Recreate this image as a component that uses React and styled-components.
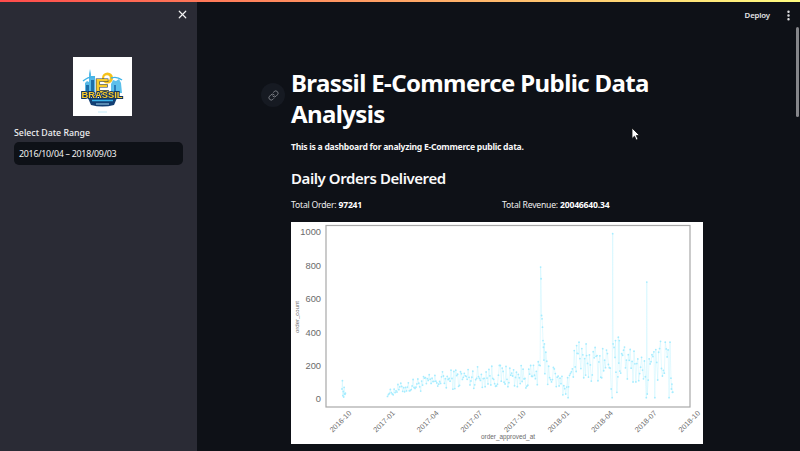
import React from "react";
import styled, { createGlobalStyle } from "styled-components";
import { X, Link, EllipsisVertical } from "lucide-react";

const GlobalStyle = createGlobalStyle`
  html, body {
    margin: 0;
    height: 100%;
    overflow: hidden;
    background: #0e1117;
  }
  #root {
    height: 100%;
  }
`;

const FONT = `"Noto Sans", "Open Sans", sans-serif`;

// chart scale: pixels inside the 412x222 picture
const PLOT = { left: 35, right: 399, top: 3.5, bottom: 185 };
const yOf = (v) => 177 - v * 0.167;
const xOfDay = (d) => 51 + d * 0.474;

const anchors = [
  [96, 30], [120, 60], [160, 85], [205, 105], [260, 125], [320, 135], [400, 130],
  [419, 150], [434, 170], [456, 100], [474, 95], [494, 190], [540, 215], [585, 210],
  [620, 195], [640, 165], [655, 190], [675, 235], [690, 250], [698, 60],
];

const spikes = {
  418: 200, 419: 790, 420: 720, 421: 500, 422: 480, 423: 430, 424: 350, 425: 310, 427: 330, 430: 280,
  477: 8, 466: 25, 472: 30, 490: 290, 495: 320, 500: 340, 515: 330, 516: 260,
  571: 990, 570: 8, 568: 60, 572: 330, 577: 350, 580: 40, 583: 370, 585: 350,
  643: 700, 642: 8, 644: 30, 660: 8, 668: 280, 682: 340, 684: 300, 690: 8, 692: 340, 695: 60, 697: 40,
};

const makeData = () => {
  let seed = 1234;
  const rnd = () => {
    seed = (seed * 16807) % 2147483647;
    return seed / 2147483647;
  };
  const early = [60, 110, 20, 45, 12, 70, 30, 28, 35];
  const points = early.map((v, i) => [xOfDay(i * 0.9), yOf(v)]);
  let a = 0;
  for (let d = 96; d <= 698; d++) {
    if (d % 2 && !spikes[d]) continue;
    while (a < anchors.length - 2 && anchors[a + 1][0] < d) a++;
    const [d0, v0] = anchors[a];
    const [d1, v1] = anchors[a + 1];
    const base = v0 + ((v1 - v0) * (d - d0)) / (d1 - d0);
    const v = spikes[d] ?? Math.max(8, base * (0.5 + rnd() * 1.05));
    points.push([xOfDay(d), yOf(v)]);
  }
  return points;
};

const points = makeData();
const EARLY_COUNT = 9;
const toPath = (list) =>
  list.map(([x, y], i) => `${i ? "L" : "M"}${x.toFixed(1)} ${y.toFixed(1)}`).join("");

const yTicks = [0, 200, 400, 600, 800, 1000];
const xTicks = ["2016-10", "2017-01", "2017-04", "2017-07", "2017-10", "2018-01", "2018-04", "2018-07", "2018-10"];

const Page = styled.div`
  display: flex;
  height: 100vh;
  position: relative;
  overflow: hidden;
  font-family: ${FONT};
  color: #fafafa;
  background: #0e1117;
`;

const Decoration = styled.div`
  position: absolute;
  top: 0;
  left: 0;
  right: 0;
  height: 2px;
  background: linear-gradient(90deg, #ff4b4b, #fffd80);
  z-index: 3;
`;

const Sidebar = styled.aside`
  width: 197px;
  flex-shrink: 0;
  background: #2a2b35;
  display: flex;
  flex-direction: column;
  padding: 8px 14px 0;
  box-sizing: border-box;
`;

const CloseRow = styled.div`
  display: flex;
  justify-content: flex-end;
  height: 49px;
  margin-right: -6px;
  color: #f4f4f4;
`;

const LogoBox = styled.div`
  width: 59px;
  height: 59px;
  background: #fff;
  margin: 0 0 11px 59px;
  filter: blur(0.35px);
`;

const FieldLabel = styled.label`
  font-size: 8.8px;
  line-height: 12px;
  font-weight: 500;
  margin-bottom: 3px;
  color: #f0f0f2;
`;

const DateInput = styled.div`
  height: 23px;
  background: #0e1117;
  border-radius: 5px;
  padding: 0 5px;
  display: flex;
  align-items: center;
  font-size: 8.9px;
  color: #f2f2f2;
  letter-spacing: -0.27px;
`;

const Main = styled.main`
  flex: 1;
  min-width: 0;
  display: flex;
  flex-direction: column;
  position: relative;
`;

const Toolbar = styled.header`
  height: 30px;
  flex-shrink: 0;
  display: flex;
  align-items: center;
  justify-content: flex-end;
  gap: 12px;
  padding: 0 5px 0 0;
  font-size: 7.8px;
  font-weight: 600;
  letter-spacing: -0.15px;
  color: #e4e4e6;
`;

const Content = styled.section`
  width: 412px;
  margin-left: 94px;
  padding-top: 37px;
`;

const Title = styled.h1`
  position: relative;
  margin: 0 0 12px;
  font-size: 24px;
  line-height: 31px;
  font-weight: 700;
  letter-spacing: -0.62px;
  color: #fff;
`;

const AnchorButton = styled.span`
  position: absolute;
  left: -30px;
  top: 16px;
  width: 24px;
  height: 24px;
  border-radius: 50%;
  background: #161a22;
  display: flex;
  align-items: center;
  justify-content: center;
  color: #9a9ca3;
`;

const Lead = styled.p`
  margin: 0 0 13px;
  font-size: 8.6px;
  line-height: 13px;
  font-weight: 700;
  letter-spacing: -0.27px;
  color: #f6f6f6;
`;

const Subtitle = styled.h2`
  margin: 0 0 10px;
  font-size: 15px;
  line-height: 22px;
  font-weight: 600;
  letter-spacing: -0.42px;
  color: #fafafa;
`;

const Stats = styled.div`
  display: grid;
  grid-template-columns: 211px 1fr;
  margin-bottom: 10px;
`;

const Stat = styled.div`
  font-size: 8.6px;
  line-height: 13px;
  letter-spacing: -0.2px;
  color: #f0f0f0;

  b {
    font-weight: 700;
    color: #fff;
  }
`;

const ChartImage = styled.svg`
  display: block;
  width: 412px;
  height: 222px;
  background: #fff;
`;

const Scrollbar = styled.div`
  position: absolute;
  right: 1px;
  top: 27px;
  width: 3px;
  height: 90px;
  border-radius: 2px;
  background: #85868a;
`;

const Cursor = styled.svg`
  position: absolute;
  left: 434px;
  top: 127px;
`;

const LogoE = styled.text`
  font-family: "Liberation Sans", sans-serif;
  font-weight: 700;
  font-size: 21px;
  fill: #f9cc2a;
  stroke: #14305a;
  stroke-width: 1.2px;
  paint-order: stroke;
`;

const LogoBrand = styled.text`
  font-family: "Liberation Sans", sans-serif;
  font-weight: 700;
  font-size: 8.5px;
  fill: #f7c92c;
  stroke: #12335f;
  stroke-width: 1.8px;
  paint-order: stroke;
  text-anchor: middle;
`;

const Logo = () => (
  <svg width="59" height="59" viewBox="0 0 59 59">
    <circle cx="34.500" cy="21" r="5.500" fill="#f5c21b" />
    <circle cx="34" cy="21" r="2.800" fill="#fff" />
    <path d="M12 36V26l2-2 2 1V17l1-5 1 5v2h4v17z" fill="#55b8e6" />
    <path d="M13 36v-8h3v8zM18 36V23h3v13z" fill="#1d6ea8" />
    <path d="M38 36V27l2-4 3 1 3-2 2 4 1 10z" fill="#5cc0ea" />
    <path d="M41 36v-8h2v8z" fill="#2a7cb8" />
    <path d="M10 24q6-5 12-4M38 21q6-2 11 2" stroke="#3fb4e8" strokeWidth="1.400" fill="none" />
    <LogoE x="22" y="36">E</LogoE>
    <path d="M15 41h29l-3 7q-11.500 3-23 0z" fill="#123f74" />
    <path d="M19 43.500h21" stroke="#3bb4ea" strokeWidth="1.500" />
    <path d="M23 47h13" stroke="#9fd6ee" strokeWidth="1" />
    <LogoBrand x="29" y="41" textLength="41" lengthAdjust="spacingAndGlyphs">BRASSIL</LogoBrand>
    <path d="M25 55h9" stroke="#cdeefa" strokeWidth="1.200" />
  </svg>
);

const AxisText = styled.text`
  font-family: "Liberation Sans", Arial, sans-serif;
  fill: #6a6a6a;
  font-size: ${(p) => p.$size || 9.3}px;
`;

const Chart = () => (
  <ChartImage viewBox="0 0 412 222">
    <rect x={PLOT.left} y={PLOT.top} width={PLOT.right - PLOT.left} height={PLOT.bottom - PLOT.top} fill="none" stroke="#a8a8a8" strokeWidth="1.200" />
    {yTicks.map((t) => (
      <AxisText key={t} x="30" y={yOf(t) + 3.400} textAnchor="end">{t}</AxisText>
    ))}
    {xTicks.map((t, i) => {
      const x = 49.500 + i * 43.600;
      return (
        <AxisText key={t} $size={7.400} x={x} y={202} textAnchor="middle" transform={`rotate(-45 ${x} 199.500)`}>
          {t}
        </AxisText>
      );
    })}
    <AxisText $size={6.400} x="217" y="217.300" textAnchor="middle">order_approved_at</AxisText>
    <AxisText $size={6} x="8" y="95" textAnchor="middle" transform="rotate(-90 8 95)">order_count</AxisText>
    <path d={toPath(points.slice(0, EARLY_COUNT))} fill="none" stroke="#c9f4ff" strokeWidth="0.500" />
    <path d={toPath(points.slice(EARLY_COUNT))} fill="none" stroke="#c9f4ff" strokeWidth="0.500" />
    {points.map(([x, y], i) => (
      <circle key={i} cx={x} cy={y} r="0.900" fill="#a6ecff" />
    ))}
  </ChartImage>
);

export default function App() {
  return (
    <Page>
      <GlobalStyle />
      <Decoration />
      <Sidebar>
        <CloseRow>
          <X size={13} strokeWidth={2.200} />
        </CloseRow>
        <LogoBox>
          <Logo />
        </LogoBox>
        <FieldLabel>Select Date Range</FieldLabel>
        <DateInput>2016/10/04 – 2018/09/03</DateInput>
      </Sidebar>
      <Main>
        <Toolbar>
          <span>Deploy</span>
          <EllipsisVertical size={13} strokeWidth={2.500} />
        </Toolbar>
        <Content>
          <Title>
            <AnchorButton>
              <Link size={11} strokeWidth={1.600} />
            </AnchorButton>
            Brassil E-Commerce Public Data Analysis
          </Title>
          <Lead>This is a dashboard for analyzing E-Commerce public data.</Lead>
          <Subtitle>Daily Orders Delivered</Subtitle>
          <Stats>
            <Stat>Total Order: <b>97241</b></Stat>
            <Stat>Total Revenue: <b>20046640.34</b></Stat>
          </Stats>
          <Chart />
        </Content>
        <Scrollbar />
        <Cursor width="10" height="14" viewBox="0 0 10 14">
          <path d="M1 1v10.500l2.500-2.300 1.700 3.800 1.800-.8-1.700-3.700H8.500z" fill="#fff" stroke="#111" strokeWidth="0.800" />
        </Cursor>
      </Main>
    </Page>
  );
}
